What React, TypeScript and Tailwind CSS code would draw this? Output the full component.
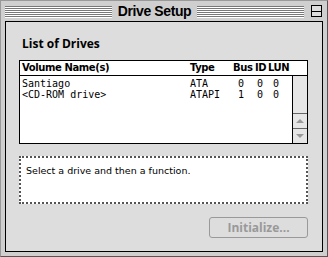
import React from "react";

const Stripes = ({ className }: { className: string }) => (
  <div className={`flex flex-col gap-[1px] ${className}`}>
    {[0, 1, 2, 3, 4, 5].map((i) => (
      <div key={i} className="h-[1px] bg-[#777] shadow-[0_1px_0_#fff]" />
    ))}
  </div>
);

export default function App() {
  return (
    <div className="w-[328px] h-[257px] bg-[#cfcfcf] relative overflow-hidden" style={{ fontFamily: '"DejaVu Sans", sans-serif' }}>
      <div className="w-[328px] h-[257px] border border-[#999] border-r-[#555] border-b-[#555] flex flex-col">
        {/* title bar */}
        <div className="h-[20px] flex items-center pl-[4px] pr-[5px] gap-[6px]">
          <Stripes className="flex-1" />
          <div className="text-[14px] font-bold text-black leading-none tracking-[-0.4px]" style={{ fontFamily: '"Liberation Sans", sans-serif' }}>Drive Setup</div>
          <Stripes className="flex-1" />
          <div className="w-[11px] h-[12px] border border-black bg-[#ddd] flex flex-col justify-center ml-[1px]">
            <div className="h-[1px] bg-black" />
          </div>
        </div>
        {/* content */}
        <div className="flex-1 mx-[4px] mb-[4px] border border-black bg-[#dddddd] flex flex-col px-[13px] pt-[16px]">
          <div className="text-[12px] font-bold text-black leading-none ml-[3px]" style={{ fontFamily: '"Open Sans", sans-serif' }}>List of Drives</div>
          <div className="mt-[10px] h-[84px] border border-black bg-white flex flex-col mr-[1px]" style={{ fontFamily: '"DejaVu Sans Mono", monospace' }}>
            <div className="h-[15px] border-b border-black flex items-center text-[10px] font-bold text-black leading-none tracking-[-0.4px]" style={{ fontFamily: '"DejaVu Sans", sans-serif' }}>
              <span className="ml-[2px] w-[168px]">Volume Name(s)</span>
              <span className="w-[43px]">Type</span>
              <span className="w-[22px]">Bus</span>
              <span className="w-[13px]">ID</span>
              <span>LUN</span>
            </div>
            <div className="flex flex-1">
              <div className="flex-1 text-[10px] leading-[11px] text-black pt-[2px]">
                <div className="flex">
                  <span className="ml-[2px] w-[168px]">Santiago</span>
                  <span className="w-[38px]">ATA</span>
                  <span className="w-[16px] text-right">0</span>
                  <span className="w-[19px] text-right">0</span>
                  <span className="w-[16px] text-right">0</span>
                </div>
                <div className="flex">
                  <span className="ml-[2px] w-[168px]">&lt;CD-ROM drive&gt;</span>
                  <span className="w-[38px]">ATAPI</span>
                  <span className="w-[16px] text-right">1</span>
                  <span className="w-[19px] text-right">0</span>
                  <span className="w-[16px] text-right">0</span>
                </div>
              </div>
              <div className="w-[15px] border-l border-black bg-[#e6e6e6] flex flex-col justify-end">
                <div className="h-[15px] border-t border-[#666] flex items-center justify-center">
                  <div className="w-0 h-0 border-l-[4px] border-r-[4px] border-b-[4px] border-l-transparent border-r-transparent border-b-[#999]" />
                </div>
                <div className="h-[15px] border-t border-[#666] flex items-center justify-center">
                  <div className="w-0 h-0 border-l-[4px] border-r-[4px] border-t-[4px] border-l-transparent border-r-transparent border-t-[#999]" />
                </div>
              </div>
            </div>
          </div>
          <div className="mt-[12px] h-[48px] border-2 border-dotted border-[#555] bg-white px-[5px] pt-[8px] text-[9.5px] leading-none text-black mr-[1px]" style={{ fontFamily: '"DejaVu Sans", sans-serif' }}>
            Select a drive and then a function.
          </div>
          <div className="flex justify-end mt-[13px] mr-[1px]">
            <div className="w-[99px] h-[21px] rounded-[3px] border border-[#999] flex items-center justify-center text-[12px] font-bold text-[#999]" style={{ fontFamily: '"Open Sans", sans-serif' }}>
              Initialize...
            </div>
          </div>
        </div>
      </div>
    </div>
  );
}
